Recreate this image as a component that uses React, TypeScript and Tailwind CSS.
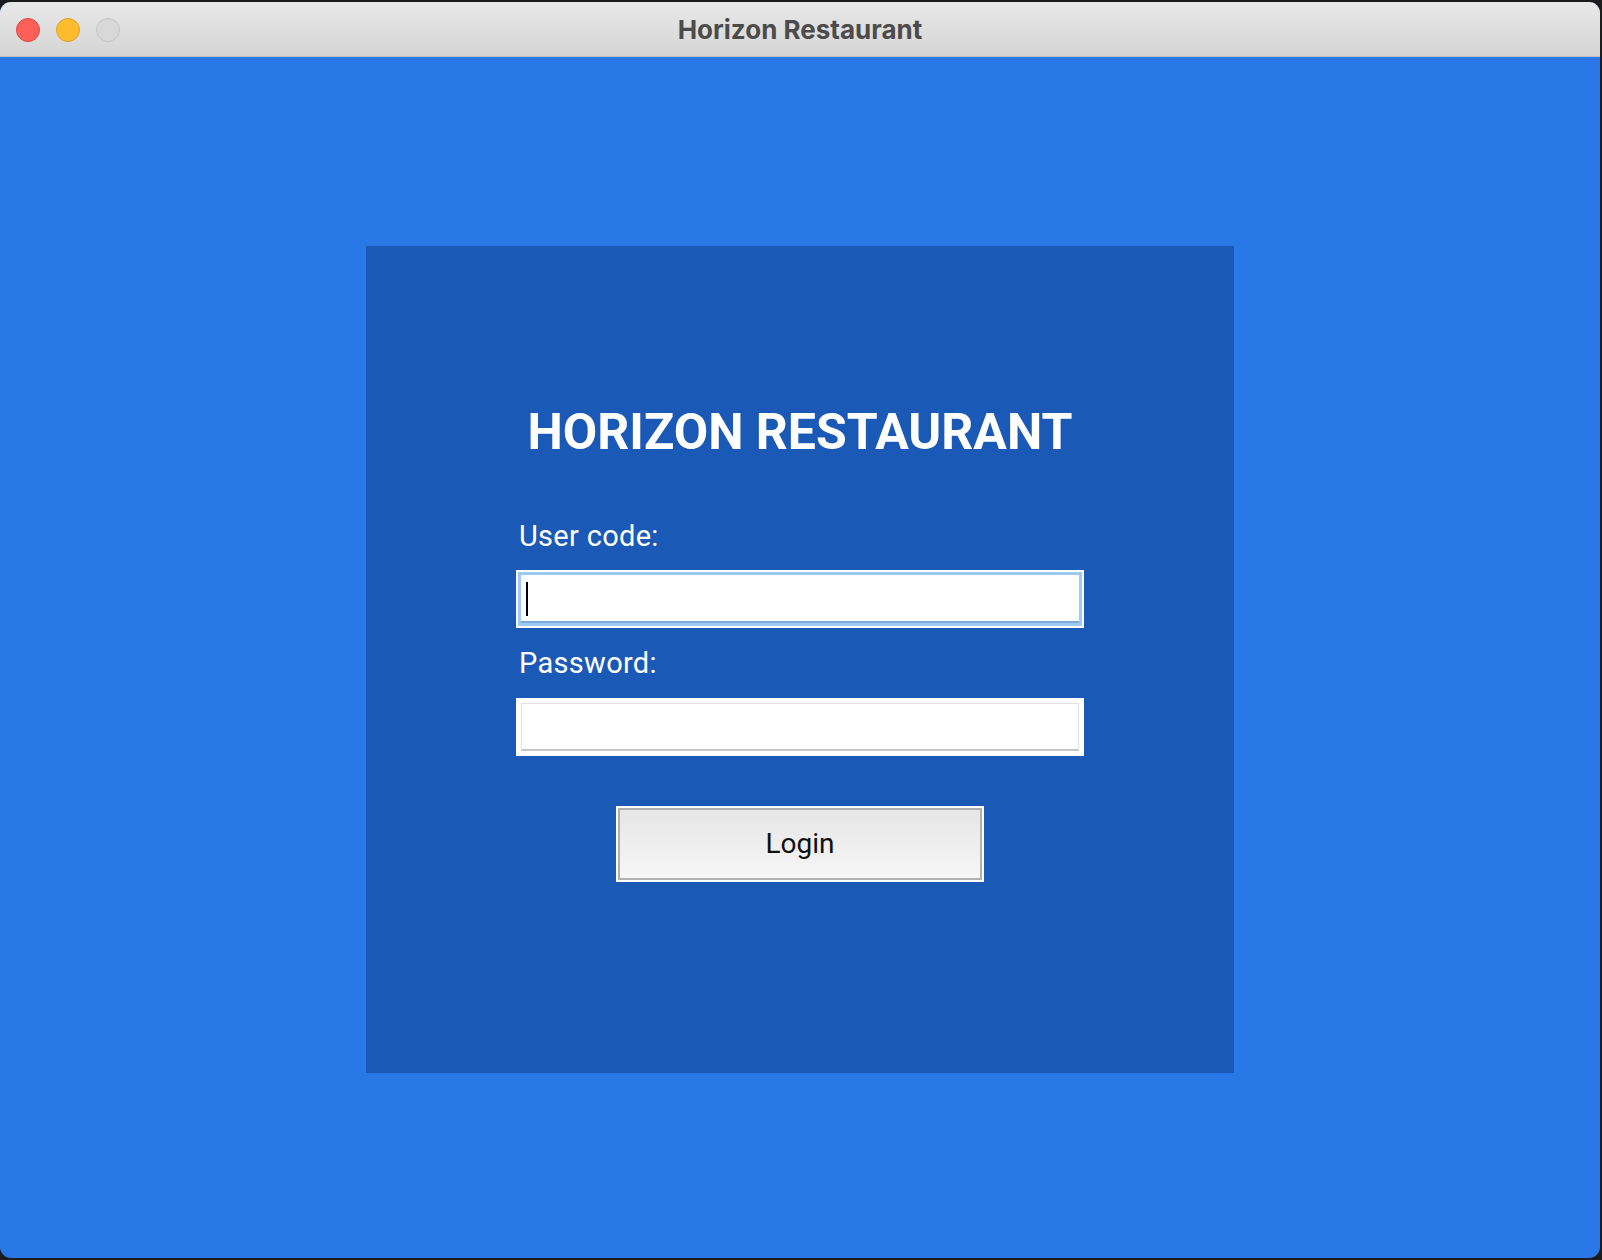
export default function App() {
  return (
    <div className="w-[1602px] h-[1260px] bg-[#1c1c1c] pt-[2px] pr-[2px] pb-[2px]">
      <div className="flex h-full w-[1600px] flex-col overflow-hidden rounded-[11px] bg-[#2a77e7]">
        {/* title bar */}
        <div className="relative flex h-[55px] shrink-0 items-center justify-center border-b border-[#bfbfbf] bg-gradient-to-b from-[#e9e9e9] to-[#d5d5d5]">
          <div className="absolute left-[16px] top-[16px] flex gap-[16px]">
            <span className="h-[24px] w-[24px] rounded-full border border-[#e0443e] bg-[#fe5f57]" />
            <span className="h-[24px] w-[24px] rounded-full border border-[#dea123] bg-[#febc2e]" />
            <span className="h-[24px] w-[24px] rounded-full border border-[#c4c4c4] bg-[#d8d8d8]" />
          </div>
          <span className="font-['Inter',sans-serif] text-[26px] font-bold text-[#4b4b4b]">Horizon Restaurant</span>
        </div>

        {/* content */}
        <div className="flex flex-1 items-center justify-center">
          <div className="mt-[3px] flex h-[827px] w-[868px] flex-col items-center bg-[#1b59b7] pt-[158px] font-['Roboto',sans-serif]">
            <h1 className="text-[50px] leading-[56px] font-bold text-white">HORIZON RESTAURANT</h1>

            <div className="mt-[59px] flex w-[568px] flex-col">
              <label className="pl-[3px] text-[29px] leading-[34px] tracking-[0.3px] text-white">User code:</label>
              <div className="mt-[17px] h-[58px] bg-white p-[2px]">
                <div className="flex h-full items-center border-[3px] border-[#9dc9f4] bg-white">
                  <div className="h-full w-full border-b-2 border-[#7aa9e0] pl-[5px] pt-[7px]">
                    <span className="block h-[34px] w-[2px] bg-black" />
                  </div>
                </div>
              </div>

              <label className="mt-[18px] pl-[3px] text-[29px] leading-[34px] tracking-[0.3px] text-white">Password:</label>
              <div className="mt-[18px] h-[58px] bg-white px-[5px] py-[5px]">
                <div className="h-full w-full border border-b-2 border-[#e2e2e2] border-b-[#c6c6c6] bg-white" />
              </div>
            </div>

            <button className="mt-[50px] h-[76px] w-[368px] bg-white p-[2px]">
              <div className="flex h-full w-full items-center justify-center border-2 border-[#b0b0b0] bg-gradient-to-b from-[#e6e6e6] to-[#f6f6f6] text-[28px] text-[#111]">
                Login
              </div>
            </button>
          </div>
        </div>
      </div>
    </div>
  )
}
